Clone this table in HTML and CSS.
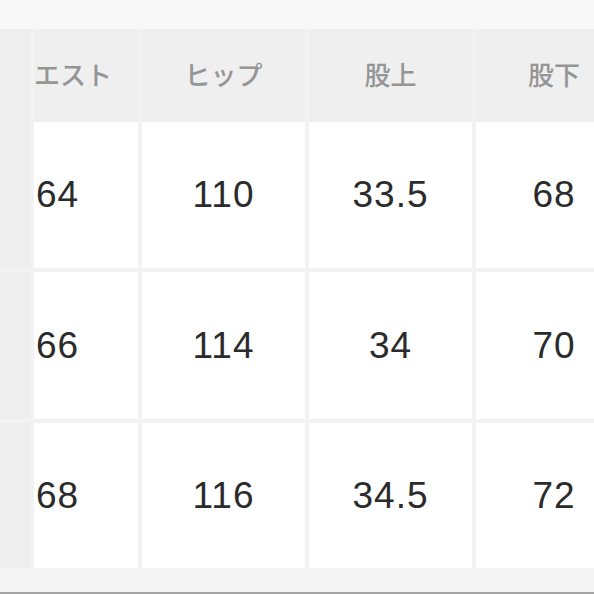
FILE: index.html
```html
<!DOCTYPE html>
<html lang="ja">
<head>
<meta charset="utf-8">
<link rel="stylesheet" href="styles.css">
</head>
<body>
<div class="frame">
  <div class="top"></div>
  <div class="table">
    <div class="cell stub head"></div>
    <div class="cell head first">エスト</div>
    <div class="cell head">ヒップ</div>
    <div class="cell head">股上</div>
    <div class="cell head">股下</div>

    <div class="cell stub"></div>
    <div class="cell num first">64</div>
    <div class="cell num">110</div>
    <div class="cell num">33.5</div>
    <div class="cell num">68</div>

    <div class="cell stub"></div>
    <div class="cell num first">66</div>
    <div class="cell num">114</div>
    <div class="cell num">34</div>
    <div class="cell num">70</div>

    <div class="cell stub"></div>
    <div class="cell num first">68</div>
    <div class="cell num">116</div>
    <div class="cell num">34.5</div>
    <div class="cell num">72</div>
  </div>
  <div class="bottom"></div>
</div>
</body>
</html>
```
FILE: styles.css
```css
html, body {
  margin: 0;
  padding: 0;
  background: #f7f7f7;
}
.frame {
  width: 594px;
  height: 594px;
  overflow: hidden;
  display: flex;
  flex-direction: column;
  background: #f7f7f7;
}
.top {
  height: 29px;
  flex: none;
  background: #f8f8f8;
}
.table {
  flex: none;
  display: grid;
  grid-template-columns: 30px 104px 163px 163px 156px;
  grid-template-rows: 89px 146px 147px 145px;
  column-gap: 4px;
  row-gap: 4px;
  width: 640px;
  background: #f2f2f2;
}
.table > .cell:nth-child(-n+5) {
  margin-bottom: -4px;
}
.cell {
  display: flex;
  align-items: center;
  justify-content: center;
  background: #ffffff;
  font-family: "Liberation Sans", "Noto Sans CJK JP", sans-serif;
  overflow: hidden;
  white-space: nowrap;
}
.cell.head {
  background: #efefef;
  color: #959595;
  font-family: "Noto Sans CJK JP", sans-serif;
  font-size: 26px;
  font-weight: 500;
  padding-bottom: 4px;
  box-sizing: border-box;
}
.cell.stub {
  background: #eeeeee;
}
.cell.num {
  color: #2b2b2b;
  font-size: 37px;
  letter-spacing: 1px;
}
.cell.first {
  justify-content: flex-start;
  padding-left: 2px;
}
.cell.head.first {
  padding-left: 0;
}
.bottom {
  flex: 1;
  background: #f4f4f4;
  border-bottom: 2px solid #a3a3a3;
}
```
